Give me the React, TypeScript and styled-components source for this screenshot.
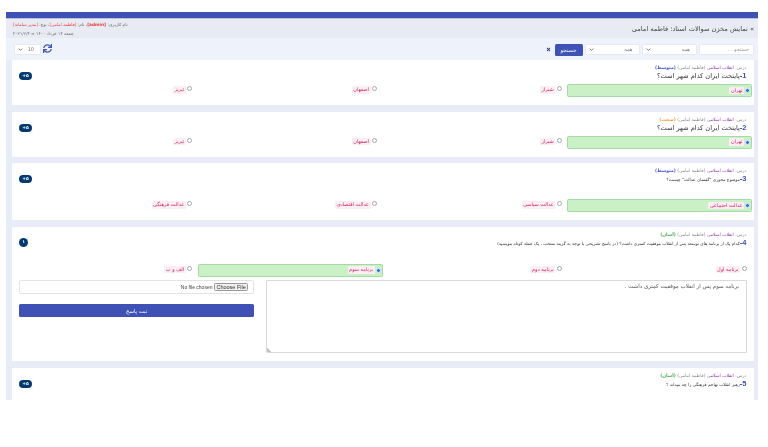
import React from "react";
import styled, { createGlobalStyle } from "styled-components";
import { FaSync, FaTimes } from "react-icons/fa";

const GlobalStyle = createGlobalStyle`
  html, body { margin: 0; padding: 0; background: #fff; }
  body { font-family: "DejaVu Sans", "Noto Sans", sans-serif; }
  * { box-sizing: border-box; }
`;

const chevron =
  "url(\"data:image/svg+xml,%3Csvg xmlns='http://www.w3.org/2000/svg' viewBox='0 0 8 5'%3E%3Cpath d='M1 1l3 3 3-3' fill='none' stroke='%23555' stroke-width='1.2'/%3E%3C/svg%3E\")";

const Frame = styled.div`
  direction: rtl;
  width: 752px;
  height: 388px;
  margin: 12px 0 0 6px;
  overflow: hidden;
  background: #e8ecf6;
  display: flex;
  flex-direction: column;
  border-top: 6px solid #3f51b5;
  filter: blur(0.35px);
`;

const PageHeader = styled.header`
  height: 20px;
  flex: none;
  display: flex;
  justify-content: space-between;
  align-items: center;
  padding: 0 4px 0 0;
  background: #e8ebf4;
  border-top: 1px solid #b9c0dc;
`;

const PageTitle = styled.h1`
  margin: 0;
  font-size: 6.6px;
  font-weight: 400;
  color: #444;
`;

const UserInfo = styled.div`
  font-size: 4.3px;
  line-height: 9px;
  color: #666;
  margin-left: 7px;
  text-align: left;
  b, span { color: #e53935; }
`;

const DateLine = styled.div`
  letter-spacing: 0.4px;
`;

const Toolbar = styled.div`
  height: 22px;
  flex: none;
  display: flex;
  align-items: flex-start;
  gap: 2px;
  padding: 5.5px 4px 0 7.5px;
  background: #eef2fb;
`;

const SearchInput = styled.input`
  width: 55px;
  height: 11.5px;
  padding: 0 4px;
  font: 5px "DejaVu Sans", sans-serif;
  border: 1px solid #e6e9f2;
  border-radius: 1.5px;
  background: #fff;
  &::placeholder { color: #999; }
`;

const FilterSelect = styled.select<{ $width: number }>`
  appearance: none;
  width: ${(p) => p.$width}px;
  height: 11.5px;
  padding: 0 6px 0 8px;
  font: 5px "DejaVu Sans", sans-serif;
  color: #777;
  border: 1px solid #e6e9f2;
  border-radius: 1.5px;
  background: #fff ${chevron} no-repeat 3px center / 4.5px 3px;
`;

const SearchButton = styled.button`
  width: 28px;
  height: 12.5px;
  padding: 0;
  font: 5.4px "DejaVu Sans", sans-serif;
  color: #fff;
  background: #3f51b5;
  border: none;
  border-radius: 1.5px;
`;

const ClearIcon = styled(FaTimes)`
  width: 5px;
  height: 5px;
  margin: 3.5px 1.5px 0 0;
  color: #2d3f8f;
`;

const RightTools = styled.div`
  margin-right: auto;
  display: flex;
  align-items: flex-start;
  gap: 2px;
`;

const RefreshIcon = styled(FaSync)`
  width: 9px;
  height: 9px;
  margin-top: 0.5px;
  color: #3f51b5;
`;

const Cards = styled.main`
  flex: 1;
  display: flex;
  flex-direction: column;
  gap: 6.5px;
  width: 742px;
  margin-left: 6px;
  margin-right: 4px;
  align-self: flex-end;
`;

const Card = styled.section`
  flex: none;
  padding: 4px 2px 8px 1px;
  background: #fff;
  &:last-child {
    flex: 1;
  }
`;

const QuestionHead = styled.div`
  display: flex;
  justify-content: space-between;
  padding: 0 5.5px 0 6px;
`;

const Meta = styled.div`
  height: 8px;
  font-size: 4.5px;
  line-height: 8px;
  color: #888;
`;

const Lesson = styled.span`
  color: #8e44ad;
`;

const Level = styled.span<{ $color: string }>`
  color: ${(p) => p.$color};
  font-weight: 700;
`;

const QuestionText = styled.div<{ $small?: boolean }>`
  height: 8px;
  font-size: ${(p) => (p.$small ? "4.3px" : "6.6px")};
  line-height: 8px;
  color: #333;
`;

const QuestionNumber = styled.b`
  color: #3f51b5;
  font-family: "Liberation Sans", sans-serif;
  font-size: 7.5px;
`;

const ScorePill = styled.span<{ $round?: boolean }>`
  align-self: flex-end;
  width: ${(p) => (p.$round ? "9px" : "13px")};
  height: ${(p) => (p.$round ? "9px" : "8px")};
  margin-bottom: ${(p) => (p.$round ? "-0.5px" : "0")};
  border-radius: 5px;
  background: #023a70;
  color: #fff;
  font-size: 4.5px;
  font-weight: 700;
  line-height: 8px;
  text-align: center;
`;

const Options = styled.div<{ $top: number }>`
  display: grid;
  grid-template-columns: repeat(4, 184.75px);
  margin-top: ${(p) => p.$top}px;
  height: 13px;
`;

const OptionItem = styled.label<{ $correct?: boolean }>`
  display: flex;
  align-items: ${(p) => (p.$correct ? "center" : "flex-start")};
  gap: ${(p) => (p.$correct ? "1px" : "1.5px")};
  height: 13px;
  padding: ${(p) => (p.$correct ? "0 1px 0 0" : "2px 5.5px 0 0")};
  background: ${(p) => (p.$correct ? "#c9f0c7" : "transparent")};
  border: ${(p) => (p.$correct ? "0.7px solid #a5dba2" : "none")};
  border-radius: 1.5px;
`;

const Radio = styled.input`
  appearance: none;
  width: 5px;
  height: 5px;
  margin: 0;
  flex: none;
  border: 0.6px solid #a8a8a8;
  border-radius: 50%;
  background: #fff;
  &:checked {
    border: 0.6px solid #dfe8fb;
    background: #2f6fe0;
  }
`;

const OptionLabel = styled.code`
  font-family: "DejaVu Sans", sans-serif;
  font-size: 5px;
  line-height: 7.5px;
  padding: 0 1.5px;
  color: #d81b60;
  background: #fbeff3;
  border-radius: 1px;
`;

const AnswerArea = styled.div`
  display: grid;
  grid-template-columns: 480.7px 235.5px;
  gap: 11.5px;
  padding: 3.7px 5.5px 0 6px;
`;

const AnswerBox = styled.textarea`
  height: 73.3px;
  padding: 1px 6.5px;
  font: 5.5px/9px "DejaVu Sans", sans-serif;
  color: #555;
  border: 0.7px solid #d9d9d9;
  border-radius: 1px;
  outline: none;
  &::-webkit-resizer {
    background: no-repeat left bottom / 5px 5px linear-gradient(to top right, #c4c4c4 50%, transparent 50%);
  }
`;

const UploadColumn = styled.div`
  display: flex;
  flex-direction: column;
  gap: 10.5px;
`;

const FileField = styled.div`
  height: 13.5px;
  padding: 2px 5px;
  border: 0.7px solid #e3e3e3;
  border-radius: 1.5px;
  input {
    display: block;
    width: 100%;
    font: 5px "Liberation Sans", sans-serif;
    color: #444;
  }
  input::file-selector-button {
    font: 5.5px "Liberation Sans", sans-serif;
    height: 8px;
    padding: 0 1.5px;
    margin: 0 0 0 1.5px;
    color: #333;
    background: #efefef;
    border: 0.6px solid #999;
    border-radius: 1.5px;
  }
`;

const SubmitButton = styled.button`
  height: 13px;
  padding: 0;
  font: 5.4px "DejaVu Sans", sans-serif;
  color: #fff;
  background: #3f51b5;
  border: none;
  border-radius: 1.5px;
`;

type Question = {
  num: number;
  text: string;
  level: string;
  levelColor: string;
  small?: boolean;
  options: string[];
  correct: number;
  top: number;
  score: string;
};

const questions: Question[] = [
  { num: 1, text: "پایتخت ایران کدام شهر است؟", level: "متوسط", levelColor: "#3f51d5", options: ["تهران", "شیراز", "اصفهان", "تبریز"], correct: 0, top: 4, score: "۵+" },
  { num: 2, text: "پایتخت ایران کدام شهر است؟", level: "سخت", levelColor: "#f0a030", options: ["تهران", "شیراز", "اصفهان", "تبریز"], correct: 0, top: 4, score: "۵+" },
  { num: 3, text: "موضوع محوری \"گفتمان عدالت\" چیست؟", level: "متوسط", levelColor: "#3f51d5", small: true, options: ["عدالت اجتماعی", "عدالت سیاسی", "عدالت اقتصادی", "عدالت فرهنگی"], correct: 0, top: 16, score: "۵+" },
];

const QuestionCard = ({ q, children }: { q: Question; children?: React.ReactNode }) => (
  <Card>
    <QuestionHead>
      <div>
        <Meta>
          درس: <Lesson>انقلاب اسلامی</Lesson> (فاطمه امامی) <Level $color={q.levelColor}>({q.level})</Level>
        </Meta>
        <QuestionText $small={q.small}>
          <QuestionNumber>{q.num}-</QuestionNumber>
          {q.text}
        </QuestionText>
      </div>
      <ScorePill $round={q.score.length === 1}>{q.score}</ScorePill>
    </QuestionHead>
    {q.options.length > 0 && (
      <Options $top={q.top}>
        {q.options.map((o, i) => (
          <OptionItem key={o} $correct={i === q.correct}>
            <Radio type="radio" name={`q${q.num}`} defaultChecked={i === q.correct} />
            <OptionLabel>{o}</OptionLabel>
          </OptionItem>
        ))}
      </Options>
    )}
    {children}
  </Card>
);

const App = () => {
  return (
    <Frame>
      <GlobalStyle />
      <PageHeader>
        <PageTitle>» نمایش مخزن سوالات استاد: فاطمه امامی</PageTitle>
        <UserInfo>
          <div>
            نام کاربری: <b>[admin]</b>، نام: <span>[فاطمه امامی]</span>، نوع: <span>[مدیر سامانه]</span>
          </div>
          <DateLine>جمعه ۱۴ خرداد ۱۴۰۰ = ۲۰۲۱/۶/۴</DateLine>
        </UserInfo>
      </PageHeader>
      <Toolbar>
        <SearchInput placeholder="جستجو ..." />
        <FilterSelect $width={55.5}>
          <option>همه</option>
        </FilterSelect>
        <FilterSelect $width={55}>
          <option>همه</option>
        </FilterSelect>
        <SearchButton>جستجو</SearchButton>
        <ClearIcon />
        <RightTools>
          <RefreshIcon />
          <FilterSelect $width={27.5}>
            <option>10</option>
          </FilterSelect>
        </RightTools>
      </Toolbar>
      <Cards>
        {questions.map((q) => (
          <QuestionCard key={q.num} q={q} />
        ))}
        <QuestionCard
          q={{
            num: 4,
            text: "کدام یک از برنامه های توسعه پس از انقلاب موفقیت کمتری داشت؟ (در پاسخ تشریحی با توجه به گزینه منتخب ، یک جمله کوتاه بنویسید)",
            level: "آسان",
            levelColor: "#4caf50",
            small: true,
            options: ["برنامه اول", "برنامه دوم", "برنامه سوم", "الف و ب"],
            correct: 2,
            top: 17,
            score: "۱",
          }}
        >
          <AnswerArea>
            <AnswerBox readOnly defaultValue="برنامه سوم پس از انقلاب موفقیت کمتری داشت ." />
            <UploadColumn>
              <FileField>
                <input type="file" />
              </FileField>
              <SubmitButton>ثبت پاسخ</SubmitButton>
            </UploadColumn>
          </AnswerArea>
        </QuestionCard>
        <QuestionCard
          q={{
            num: 5,
            text: "رهبر انقلاب تهاجم فرهنگی را چه میداند ؟",
            level: "آسان",
            levelColor: "#4caf50",
            small: true,
            options: [],
            correct: -1,
            top: 0,
            score: "۵+",
          }}
        />
      </Cards>
    </Frame>
  );
};

export default App;
